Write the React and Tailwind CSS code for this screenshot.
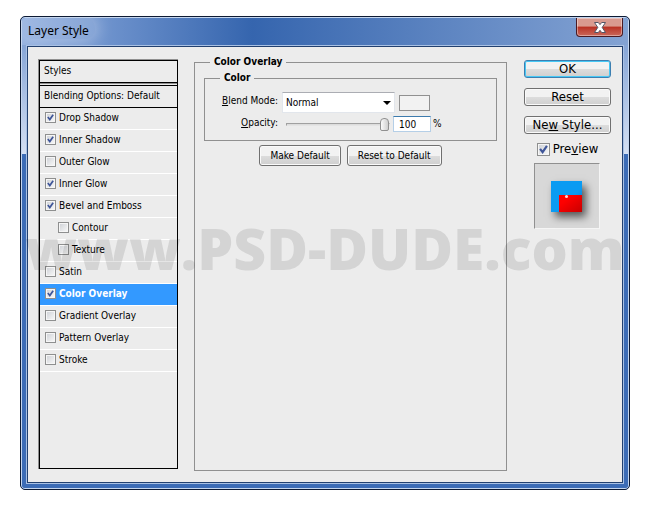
import { useState } from 'react';
import clsx from 'clsx';

const EFFECTS = [
  { id: 'drop-shadow', label: 'Drop Shadow', on: true },
  { id: 'inner-shadow', label: 'Inner Shadow', on: true },
  { id: 'outer-glow', label: 'Outer Glow', on: false },
  { id: 'inner-glow', label: 'Inner Glow', on: true },
  { id: 'bevel', label: 'Bevel and Emboss', on: true },
  { id: 'contour', label: 'Contour', on: false, nested: true },
  { id: 'texture', label: 'Texture', on: false, nested: true },
  { id: 'satin', label: 'Satin', on: false },
  { id: 'color-overlay', label: 'Color Overlay', on: true },
  { id: 'gradient-overlay', label: 'Gradient Overlay', on: false },
  { id: 'pattern-overlay', label: 'Pattern Overlay', on: false },
  { id: 'stroke', label: 'Stroke', on: false },
];

function CheckBox({ id, checked, onChange, large }) {
  return (
    <span className="grid shrink-0 place-items-center">
      <input
        id={id}
        type="checkbox"
        checked={checked}
        onChange={onChange}
        className={clsx(
          'peer col-start-1 row-start-1 appearance-none border border-[#8e8f8f] bg-linear-to-br from-[#cdd0d5] to-[#fafafa] shadow-[inset_0_0_0_1px_#f6f6f6]',
          large ? 'size-[13px]' : 'size-[11px]'
        )}
      />
      <svg
        viewBox="0 0 10 10"
        className={clsx(
          'pointer-events-none invisible col-start-1 row-start-1 peer-checked:visible',
          large ? 'size-[9px]' : 'size-[7px]'
        )}
      >
        <path d="M1.2 4.4 L4 8 L8.8 1" fill="none" stroke="#3f5699" strokeWidth="2.4" />
      </svg>
    </span>
  );
}

function EffectRow({ effect, active, checked, onToggle }) {
  return (
    <li
      className={clsx(
        'flex h-[22px] items-center gap-[3px] border-b border-white pb-[2px]',
        effect.nested ? 'pl-[18px]' : 'pl-[5px]',
        active && 'bg-[#3399ff] font-bold text-white'
      )}
    >
      <CheckBox id={effect.id} checked={checked} onChange={onToggle} />
      <label htmlFor={effect.id}>{effect.label}</label>
    </li>
  );
}

function SmallButton({ children }) {
  return (
    <button className="h-[21px] rounded-[3px] border border-[#707070] bg-linear-to-b from-[#f2f2f2] from-50% via-[#dddddd] via-50% to-[#cfcfcf] px-[10px] shadow-[inset_0_0_0_1px_#fafafa]">
      {children}
    </button>
  );
}

function SideButton({ children, primary }) {
  return (
    <button
      className={clsx(
        'h-[18px] w-full rounded-[3px] border bg-linear-to-b from-[#f2f2f2] from-50% via-[#dddddd] via-50% to-[#cfcfcf] text-[13px] leading-4',
        primary
          ? 'border-[#3c7fb1] shadow-[inset_0_0_0_1px_#46c8f5]'
          : 'border-[#707070] shadow-[inset_0_0_0_1px_#fafafa]'
      )}
    >
      {children}
    </button>
  );
}

function TitleBar() {
  return (
    <header className="flex h-[27px] items-start justify-between bg-linear-to-r from-[#8fadde] via-[#3565ae] via-38% to-[#84a3d3] pr-[5px]">
      <h1 className="rounded-full bg-white/15 px-1.5 pt-[5px] font-['Noto_Sans','Open_Sans',sans-serif] text-[12px] leading-4 shadow-[0_0_16px_4px_rgba(255,255,255,0.3)]">
        Layer Style
      </h1>
      <button
        aria-label="Close"
        className="grid h-[19px] w-[47px] place-items-center rounded-b-[4px] border border-t-0 border-[#4a1a22] bg-linear-to-b from-[#d99a8f] from-45% via-[#b92f22] via-50% to-[#c9675a] shadow-[inset_0_0_0_1px_rgba(255,255,255,0.4)]"
      >
        <svg viewBox="0 0 12 11" className="h-[11px] w-[12px]">
          <path
            d="M0.5 0.5 H4.3 L6 2.6 L7.7 0.5 H11.5 L8.2 5.4 L11.5 10.5 H7.7 L6 8.3 L4.3 10.5 H0.5 L3.8 5.4 Z"
            fill="#fff"
            stroke="#535666"
            strokeWidth="1"
          />
        </svg>
      </button>
    </header>
  );
}

function ColorOverlayPanel() {
  const [opacity, setOpacity] = useState(100);

  return (
    <fieldset className="min-w-0 flex-1 border border-[#909090] px-[9px] pt-[2px]">
      <legend className="ml-[6px] px-1 leading-[14px] font-bold">Color Overlay</legend>

      <fieldset className="border border-[#909090] pb-[8px] pl-[6px]">
        <legend className="ml-[9px] px-1 leading-[14px] font-bold">Color</legend>
        <div className="grid grid-cols-[67px_1fr] items-center gap-x-1 gap-y-px pt-[7px]">
          <label htmlFor="blend" className="pb-1 text-right whitespace-nowrap">
            <u>B</u>lend Mode:
          </label>
          <div className="flex items-center gap-1">
            <span className="grid w-[113px] items-center">
              <select
                id="blend"
                className="col-start-1 row-start-1 h-[21px] w-full appearance-none border border-[#e2e6ec] border-t-[#abadb3] bg-white pl-[3px]"
              >
                <option>Normal</option>
                <option>Multiply</option>
                <option>Screen</option>
              </select>
              <svg viewBox="0 0 8 4" className="pointer-events-none col-start-1 row-start-1 mr-1 h-[4px] w-[8px] justify-self-end">
                <path d="M0 0 H8 L4 4 Z" fill="#000" />
              </svg>
            </span>
            <button aria-label="Overlay color" className="h-[16px] w-[31px] border border-[#909090] bg-[#f2f2f2]" />
          </div>

          <label htmlFor="opacity" className="text-right">
            <u>O</u>pacity:
          </label>
          <div className="flex items-center pt-[2px]">
            <input
              aria-label="Opacity slider"
              type="range"
              min="0"
              max="100"
              value={opacity}
              onChange={(e) => setOpacity(Number(e.target.value))}
              className="ml-[4px] h-[14px] w-[104px] appearance-none bg-transparent [&::-webkit-slider-runnable-track]:h-[3px] [&::-webkit-slider-runnable-track]:border [&::-webkit-slider-runnable-track]:border-[#e4e4e4] [&::-webkit-slider-runnable-track]:border-t-[#a0a0a0] [&::-webkit-slider-runnable-track]:border-l-[#a0a0a0] [&::-webkit-slider-runnable-track]:bg-[#dcdcdc] [&::-webkit-slider-thumb]:-mt-[6px] [&::-webkit-slider-thumb]:h-[13px] [&::-webkit-slider-thumb]:w-[9px] [&::-webkit-slider-thumb]:appearance-none [&::-webkit-slider-thumb]:rounded-t-[4px] [&::-webkit-slider-thumb]:rounded-b-[2px] [&::-webkit-slider-thumb]:border [&::-webkit-slider-thumb]:border-[#909090] [&::-webkit-slider-thumb]:bg-linear-to-r [&::-webkit-slider-thumb]:from-[#fafafa] [&::-webkit-slider-thumb]:to-[#cfcfcf]"
            />
            <input
              id="opacity"
              value={opacity}
              onChange={(e) => setOpacity(Number(e.target.value) || 0)}
              className="ml-[3px] h-[16px] w-[38px] border border-[#b5cfe7] border-t-[#3d7bad] bg-white pl-[5px]"
            />
            <span className="pl-[2px]">%</span>
          </div>
        </div>
      </fieldset>

      <div className="flex justify-center gap-1.5 pt-1">
        <SmallButton>Make Default</SmallButton>
        <SmallButton>Reset to Default</SmallButton>
      </div>
    </fieldset>
  );
}

function PreviewSwatch() {
  return (
    <div className="mt-[6px] ml-[10px] grid size-[66px] place-items-center border border-[#f5f5f5] border-t-[#909090] border-l-[#909090] bg-[#d8d8d8] pr-px">
      <div className="flex size-[31px] items-end justify-end bg-linear-to-br from-[#0a9bf2] from-60% to-[#0b70b8] shadow-[4px_5px_8px_rgba(0,0,0,0.6)]">
        <svg viewBox="0 0 23 17" className="h-[17px] w-[23px]">
          <defs>
            <linearGradient id="red" x1="0" y1="0" x2="1" y2="1">
              <stop offset="0.3" stopColor="#fe0000" />
              <stop offset="1" stopColor="#c80000" />
            </linearGradient>
          </defs>
          <rect width="23" height="17" fill="url(#red)" />
          <circle cx="7.5" cy="1.5" r="1.5" fill="#ffd5d5" />
        </svg>
      </div>
    </div>
  );
}

export default function App() {
  const [enabled, setEnabled] = useState(() => Object.fromEntries(EFFECTS.map((e) => [e.id, e.on])));
  const [preview, setPreview] = useState(true);

  const toggle = (id) => setEnabled((prev) => ({ ...prev, [id]: !prev[id] }));

  return (
    <div className="flex min-h-screen flex-col bg-white px-5 pt-4 pb-[17px] font-['DejaVu_Sans_Condensed','DejaVu_Sans',sans-serif] text-[10px] leading-[14px] text-black">
      <div className="relative flex flex-1 flex-col rounded-[5px] border border-[#0d1a33] bg-[#3c6cb6]">
        <div className="flex flex-1 flex-col overflow-hidden rounded-[4px] border border-[#c5d6ee]">
          <TitleBar />

          <div className="flex flex-1 bg-[linear-gradient(#86a5d6,#d5e0f3_109px,#3c6cb6_109px)] px-1 pb-1">
            <div className="flex flex-1 border border-[#a9c1e4]">
              <main className="flex flex-1 gap-4 border border-[#22406f] bg-[#ececec] pr-[11px] pb-[11px] pl-[10px]">
                {/* Effects list */}
                <nav className="mt-[12px] mb-[2px] flex w-[140px] shrink-0 flex-col border-t border-l border-[#909090]">
                  <div className="flex-1 border border-black">
                    <div className="h-[22px] border-b border-black pl-1 leading-[20px]">Styles</div>
                    <div className="h-[3px] border-y border-[#909090] border-b-black" />
                    <div className="h-[22px] border-b border-black pl-1 leading-[20px] whitespace-nowrap">
                      Blending Options: Default
                    </div>
                    <ul>
                      {EFFECTS.map((effect) => (
                        <EffectRow
                          key={effect.id}
                          effect={effect}
                          active={effect.id === 'color-overlay'}
                          checked={enabled[effect.id]}
                          onToggle={() => toggle(effect.id)}
                        />
                      ))}
                    </ul>
                  </div>
                </nav>

                <div className="flex min-w-0 flex-1 pt-[8px]">
                  <ColorOverlayPanel />
                </div>

                {/* Dialog actions */}
                <aside className="w-[88px] shrink-0 pt-[13px] pl-px">
                  <div className="flex flex-col gap-[10px]">
                    <SideButton primary>OK</SideButton>
                    <SideButton>Reset</SideButton>
                    <SideButton>
                      Ne<u>w</u> Style...
                    </SideButton>
                  </div>
                  <div className="mt-[7px] flex items-center justify-center gap-[3px] text-[13px] leading-4">
                    <CheckBox id="preview" large checked={preview} onChange={() => setPreview(!preview)} />
                    <label htmlFor="preview">
                      Pre<u>v</u>iew
                    </label>
                  </div>
                  <PreviewSwatch />
                </aside>
              </main>
            </div>
          </div>
        </div>

        {/* Watermark over the whole dialog */}
        <div className="pointer-events-none absolute inset-x-0 top-[191px] flex justify-center">
          <span className="font-['Open_Sans','Noto_Sans',sans-serif] text-[57px] leading-[80px] font-extrabold whitespace-nowrap text-black/10">
            www.PSD-DUDE.com
          </span>
        </div>
      </div>
    </div>
  );
}
